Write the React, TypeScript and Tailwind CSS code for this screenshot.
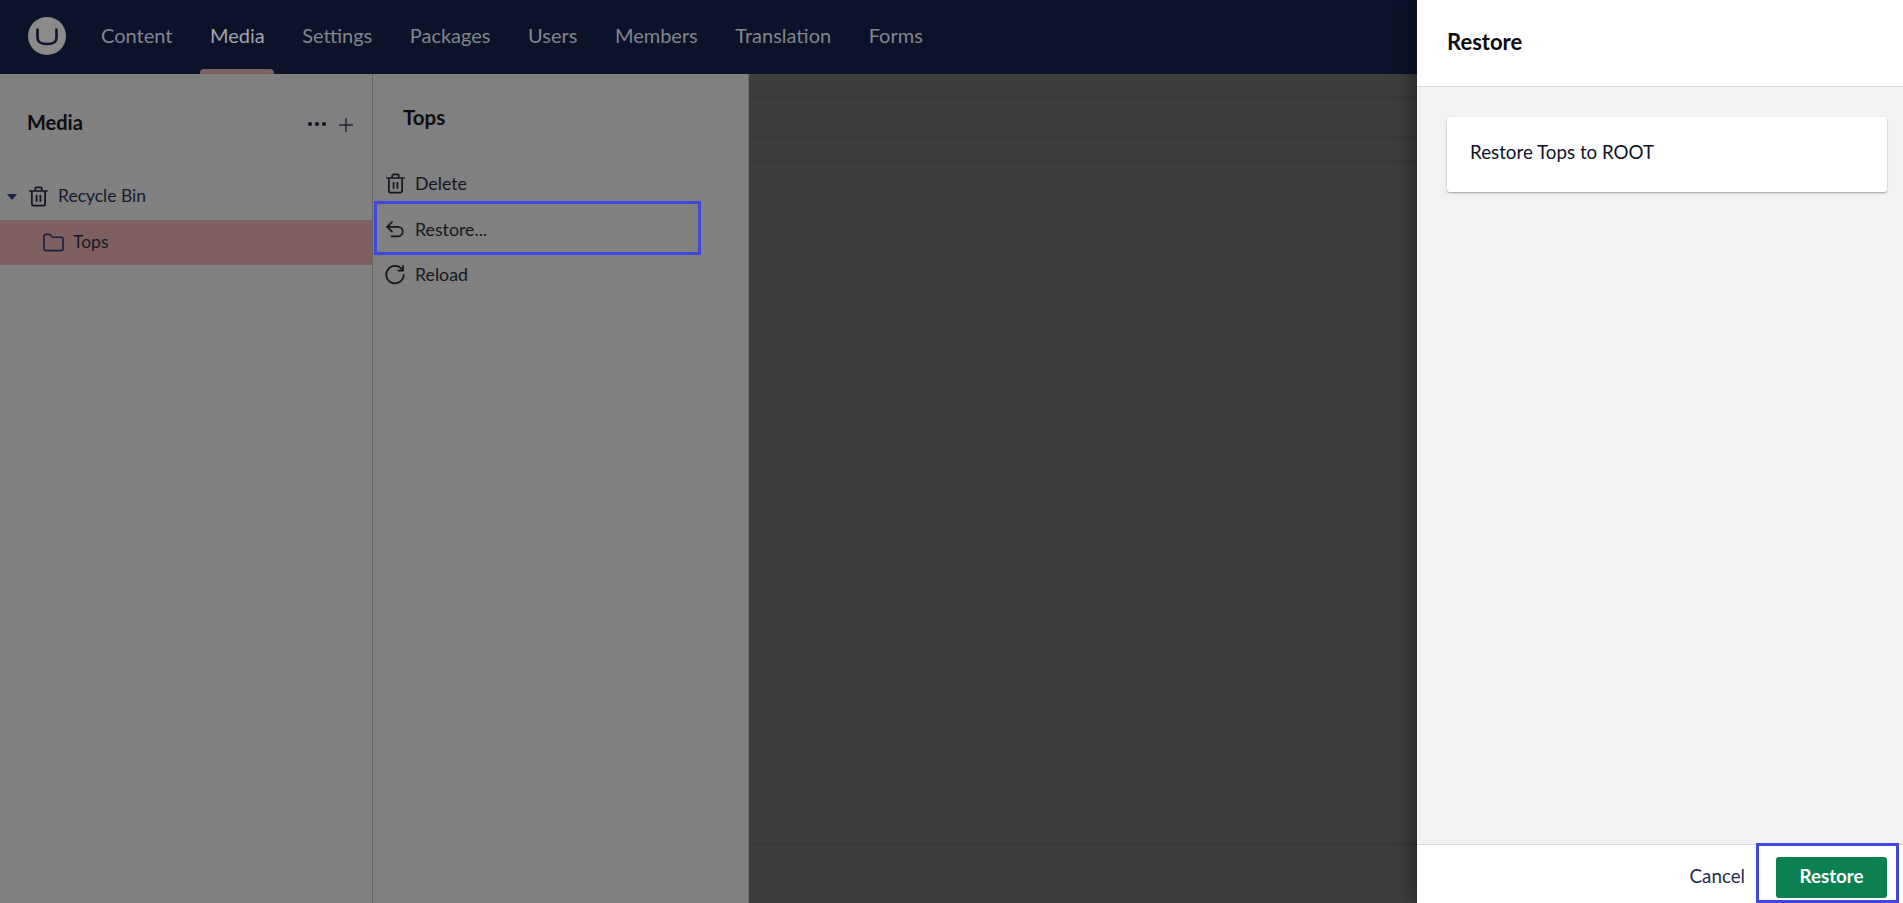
const navItems = ['Content', 'Media', 'Settings', 'Packages', 'Users', 'Members', 'Translation', 'Forms'];

function TrashIcon({ className }: { className?: string }) {
  return (
    <svg viewBox="0 0 20 22" fill="none" stroke="currentColor" strokeWidth="1.8" className={className}>
      <path d="M1 5.2h18" strokeLinecap="round" />
      <path d="M6.5 5V3a1.6 1.6 0 0 1 1.6-1.6h3.8A1.6 1.6 0 0 1 13.5 3v2" />
      <path d="M3 5.5v13.2A2 2 0 0 0 5 20.7h10a2 2 0 0 0 2-2V5.5" />
      <path d="M8 9.5v7M12 9.5v7" />
    </svg>
  );
}

function FolderIcon({ className }: { className?: string }) {
  return (
    <svg viewBox="0 0 22 19" fill="none" stroke="currentColor" strokeWidth="1.7" strokeLinejoin="round" className={className}>
      <path d="M1 3a2 2 0 0 1 2-2h4.2l2.6 3H19a2 2 0 0 1 2 2v10a2 2 0 0 1-2 2H3a2 2 0 0 1-2-2z" />
    </svg>
  );
}

function RestoreIcon({ className }: { className?: string }) {
  return (
    <svg viewBox="0 0 18 17" fill="none" stroke="currentColor" strokeWidth="1.7" strokeLinecap="round" strokeLinejoin="round" className={className}>
      <path d="M6 1 1.2 5.8 6 10.6" />
      <path d="M1.2 5.8H12a4.8 4.8 0 0 1 0 9.6H5.5" />
    </svg>
  );
}

function ReloadIcon({ className }: { className?: string }) {
  return (
    <svg viewBox="0 0 20 20" fill="none" stroke="currentColor" strokeWidth="1.8" strokeLinecap="round" strokeLinejoin="round" className={className}>
      <path d="M17 4.5A8.7 8.7 0 1 0 18.7 10" />
      <path d="M18 1v4.6h-4.6" />
    </svg>
  );
}

function ActionItem({ icon, label }: { icon: React.ReactNode; label: string }) {
  return (
    <div className="flex h-[45.5px] items-center pl-[12px] text-[#16161e]">
      <span className="flex w-[20px] justify-center">{icon}</span>
      <span className="ml-[10px] text-[17.75px]">{label}</span>
    </div>
  );
}

export default function App() {
  return (
    <div className="relative flex h-[903px] w-[1903px] flex-col overflow-hidden bg-[#3d3d3d] font-['Lato','Noto_Sans',sans-serif]">
      <header className="flex h-[74px] shrink-0 items-center bg-[#0b1229]">
        <div className="mb-[2px] ml-[28px] mr-[16.25px] flex h-[38px] w-[38px] items-center justify-center rounded-full bg-[#8a8a8a]">
          <svg viewBox="0 0 24 18" fill="none" stroke="#0b1229" strokeWidth="2.6" strokeLinecap="round" className="mt-[2px] h-[18px] w-[24px]">
            <path d="M2.5 1.5v8c0 5 3 6.5 9.5 6.5s9.5-1.5 9.5-6.5v-8" />
          </svg>
        </div>
        <nav className="flex h-full">
          {navItems.map((item) => (
            <div key={item} className="relative flex h-full items-center px-[18.75px] pb-[4px]">
              <span className={item === 'Media' ? 'text-[20px] text-[#a3a5ad]' : 'text-[20px] text-[#83868f]'}>{item}</span>
              {item === 'Media' && <span className="absolute bottom-0 left-[9px] right-[9px] h-[5px] rounded-t-[4px] bg-[#7d6060]" />}
            </div>
          ))}
        </nav>
      </header>

      <div className="flex min-h-0 flex-1">
        <aside className="w-[373px] shrink-0 border-r border-[#666666] bg-[#808080]">
          <div className="flex h-[67px] items-end justify-between pb-[5px] pl-[27px] pr-[19px]">
            <h2 className="text-[20px] font-bold leading-[28px] text-[#0c0c12]">Media</h2>
            <div className="flex items-center gap-[13px] pb-[4px] text-[#1f2233]">
              <span className="flex gap-[3px] pb-[3px]">
                <i className="h-[4px] w-[4px] rounded-full bg-[#11131f]" />
                <i className="h-[4px] w-[4px] rounded-full bg-[#11131f]" />
                <i className="h-[4px] w-[4px] rounded-full bg-[#11131f]" />
              </span>
              <svg viewBox="0 0 14 14" stroke="currentColor" strokeWidth="1.4" className="h-[14px] w-[14px]">
                <path d="M7 0v14M0 7h14" />
              </svg>
            </div>
          </div>
          <div className="mt-[33px] flex h-[46px] items-center pb-[1px] text-[#16192b]">
            <span className="ml-[7px] h-0 w-0 border-x-[5px] border-t-[6px] border-x-transparent border-t-[#1b2040]" />
            <TrashIcon className="ml-[12px] h-[21px] w-[19px] text-[#11131f]" />
            <span className="ml-[10px] text-[17.5px]">Recycle Bin</span>
          </div>
          <div className="flex h-[45px] items-center pb-[1px] bg-[#7e6060] text-[#16192b]">
            <FolderIcon className="ml-[43px] h-[19px] w-[21px] text-[#1b2040]" />
            <span className="ml-[9px] text-[17.5px]">Tops</span>
          </div>
        </aside>

        <section className="w-[376px] shrink-0 border-r border-[#6e6e6e] bg-[#808080]">
          <h3 className="mt-[29px] pl-[30px] text-[20.5px] font-bold leading-[28px] text-[#0c0c12]">Tops</h3>
          <div className="mt-[30px]">
            <ActionItem icon={<TrashIcon className="h-[21px] w-[19px]" />} label="Delete" />
            <ActionItem icon={<RestoreIcon className="h-[17px] w-[18px]" />} label="Restore..." />
            <ActionItem icon={<ReloadIcon className="h-[20px] w-[20px]" />} label="Reload" />
          </div>
        </section>

        <main className="flex min-w-0 flex-1 flex-col">
          <div className="h-[24px] border-b border-[#353535]" />
          <div className="h-[40px] border-b border-[#353535]" />
          <div className="h-[24px] border-b border-[#353535]" />
          <div className="flex-1 border-b border-[#353535]" />
          <div className="h-[58px]" />
        </main>
      </div>

      <div className="absolute inset-y-0 right-0 flex w-[486px] flex-col bg-[#f2f2f4] shadow-[-6px_0_18px_rgba(0,0,0,0.35)]">
        <div className="flex h-[87px] shrink-0 items-center border-b border-[#d8d8de] bg-white pb-[4px] pl-[30px]">
          <h1 className="text-[22px] font-bold text-[#0c0c12]">Restore</h1>
        </div>
        <div className="flex-1 px-[30px] pt-[30px]">
          <div className="flex h-[75px] w-[440px] items-center rounded-[3px] bg-white pb-[4px] pl-[23px] shadow-[0_1px_2px_rgba(0,0,0,0.35)]">
            <p className="text-[18.75px] text-[#0f1226]">Restore Tops to ROOT</p>
          </div>
        </div>
        <div className="flex h-[59px] shrink-0 items-center justify-end border-t border-[#d8d8de] bg-white pr-[16px] pt-[7px]">
          <span className="mb-[3px] mr-[31px] text-[18.75px] text-[#1f2a50]">Cancel</span>
          <button className="h-[41px] w-[111px] rounded-[3px] bg-[#0b8152] pb-[2px] text-[18.75px] font-bold text-white">Restore</button>
        </div>
      </div>

      {/* annotation boxes */}
      <div className="absolute left-[374px] top-[201px] h-[54px] w-[327px] border-[3px] border-[#4146dc]" />
      <div className="absolute left-[1756px] top-[843px] h-[60px] w-[143px] border-[3px] border-[#4146dc]" />
    </div>
  );
}
